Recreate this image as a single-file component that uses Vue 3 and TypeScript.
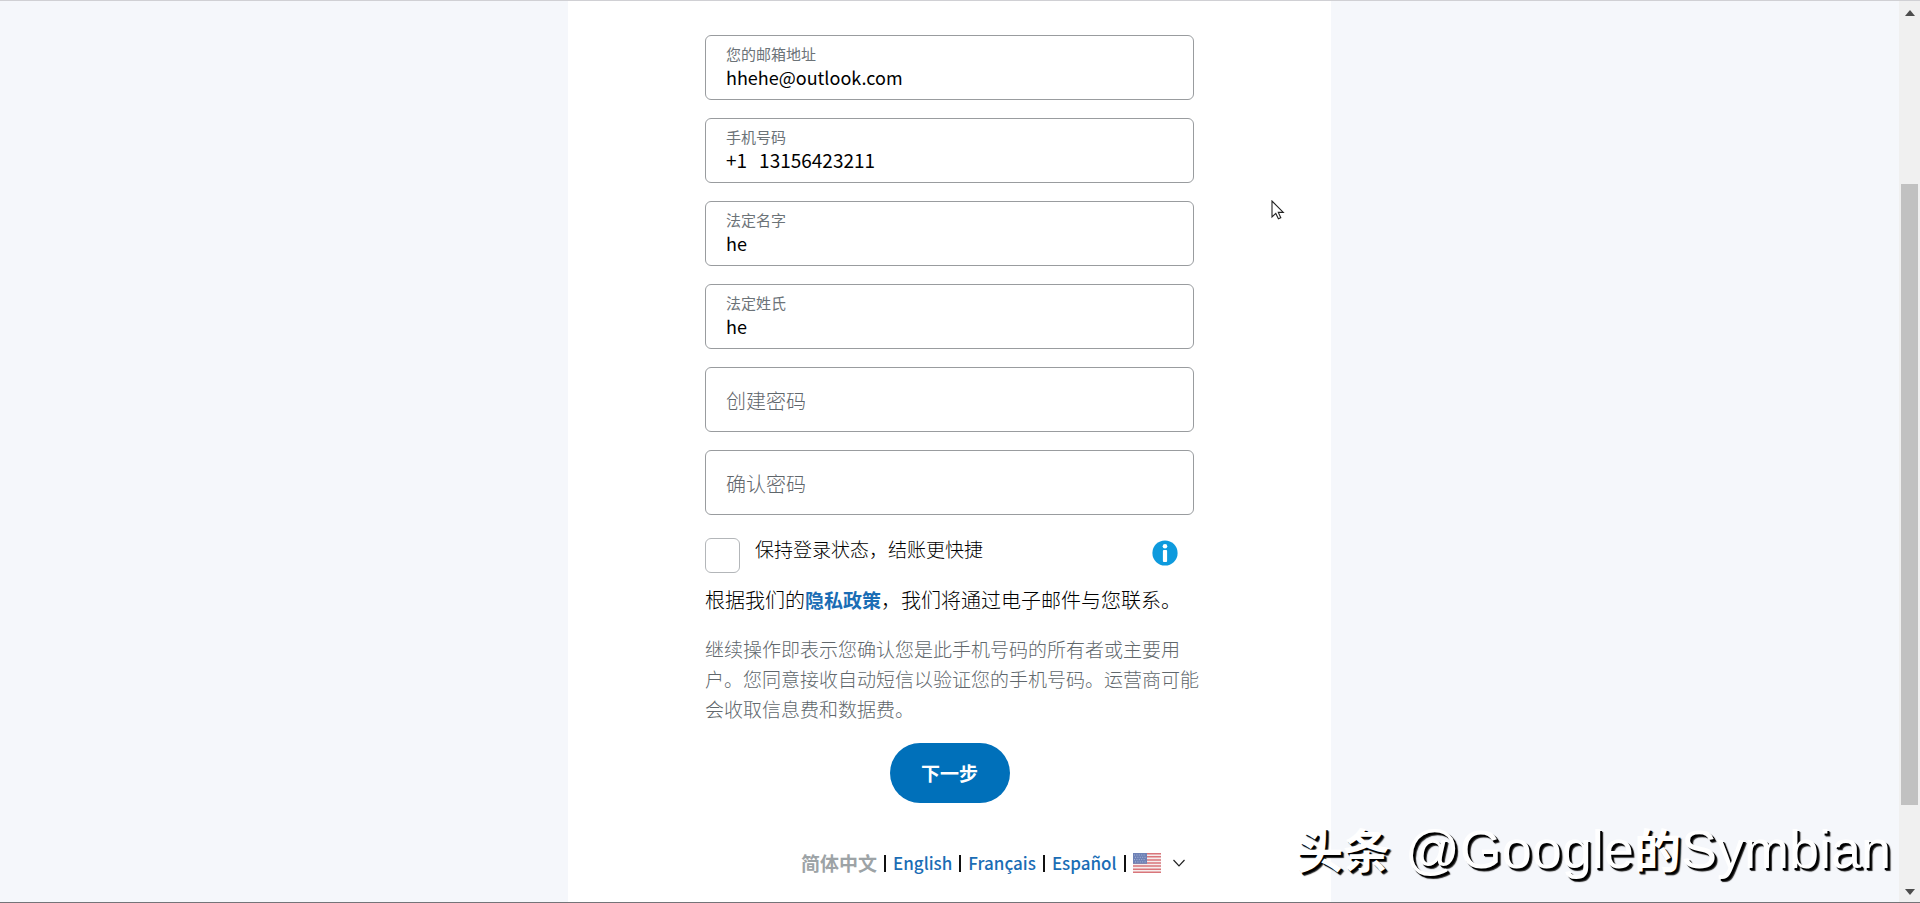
<script setup lang="ts">
import { ref } from 'vue'

interface TextField {
  id: string
  label: string
  type: string
  value: string
  prefix?: string
}

const fields = ref<TextField[]>([
  { id: 'email', label: '您的邮箱地址', type: 'email', value: 'hhehe@outlook.com' },
  { id: 'phone', label: '手机号码', type: 'tel', value: '13156423211', prefix: '+1' },
  { id: 'first-name', label: '法定名字', type: 'text', value: 'he' },
  { id: 'last-name', label: '法定姓氏', type: 'text', value: 'he' },
])

const passwords = ref([
  { id: 'password', label: '创建密码', value: '' },
  { id: 'confirm', label: '确认密码', value: '' },
])

const languages = ['English', 'Français', 'Español']
const staySignedIn = ref(false)
</script>

<template>
  <div class="window">
    <main class="page">
      <form class="card" @submit.prevent>
        <div class="fields">
          <div v-for="f in fields" :key="f.id" class="field">
            <label :for="f.id">{{ f.label }}</label>
            <div class="value">
              <span v-if="f.prefix" class="prefix">{{ f.prefix }}</span>
              <input :id="f.id" v-model="f.value" :type="f.type" />
            </div>
          </div>
          <div v-for="p in passwords" :key="p.id" class="field empty">
            <input :id="p.id" v-model="p.value" class="password" type="password" :placeholder="p.label" :aria-label="p.label" />
          </div>
        </div>

        <div class="stay">
          <input id="stay" v-model="staySignedIn" type="checkbox" />
          <label for="stay">保持登录状态，结账更快捷</label>
          <button class="info" type="button" aria-label="info">
            <svg viewBox="0 0 26 26" width="26" height="26">
              <circle cx="13" cy="13" r="12.6" fill="#0e9add" />
              <circle cx="13" cy="6.2" r="2.3" fill="#fff" />
              <rect x="10.9" y="10" width="4.2" height="12" rx="1" fill="#fff" />
            </svg>
          </button>
        </div>

        <p class="policy">根据我们的<a href="#">隐私政策</a>，我们将通过电子邮件与您联系。</p>
        <p class="consent">继续操作即表示您确认您是此手机号码的所有者或主要用户。您同意接收自动短信以验证您的手机号码。运营商可能会收取信息费和数据费。</p>

        <button class="next" type="submit">下一步</button>

        <nav class="languages">
          <a class="current" href="#">简体中文</a>
          <template v-for="l in languages" :key="l">
            <i class="bar"></i>
            <a href="#">{{ l }}</a>
          </template>
          <i class="bar"></i>
          <button class="country" type="button" aria-label="country">
            <svg class="flag" viewBox="0 0 28 20" width="28" height="20">
              <path fill="#f6eeee" d="M0 0h28v20H0z" />
              <path stroke="#d9767b" stroke-width="1.54" d="M0 .77h28M0 3.85h28M0 6.92h28M0 10h28M0 13.08h28M0 16.15h28M0 19.23h28" />
              <path fill="#6f82b6" d="M0 0h14v10.8H0z" />
              <path stroke="#a9b5d6" stroke-width="1" stroke-dasharray="1 1.4" d="M1 2h12M2 4.3h11M1 6.6h12M2 8.9h11" />
            </svg>
            <svg viewBox="0 0 12 8" width="12" height="8">
              <path d="M.5 1 6 6.8 11.5 1" fill="none" stroke="#222" stroke-width="1.2" />
            </svg>
          </button>
        </nav>
      </form>
    </main>

    <div class="scrollbar">
      <svg viewBox="0 0 10 6" width="10" height="6"><path d="M5 0l5 6H0z" fill="#4d4d4d" /></svg>
      <div class="track"><div class="thumb"></div></div>
      <svg viewBox="0 0 10 6" width="10" height="6"><path d="M0 0h10L5 6z" fill="#4d4d4d" /></svg>
    </div>

    <svg class="cursor" viewBox="0 0 14 20" width="14" height="20">
      <path d="M1 1v16l3.8-3.6 2.6 5.4 2.4-1.1-2.5-5.3h5z" fill="#fff" stroke="#222" stroke-width="1.1" />
    </svg>
    <div class="watermark"><b>头条</b> @Google<b>的</b>Symbian</div>
  </div>
</template>

<style>
body {
  margin: 0;
  overflow: hidden;
}
</style>

<style scoped>
* {
  box-sizing: border-box;
}
.window {
  position: relative;
  display: flex;
  height: 100vh;
  overflow: hidden;
  border-top: 1px solid #d0d0d4;
  border-bottom: 1px solid #747478;
  background: #f5f7fb;
  color: #000;
  font-family: "Noto Sans CJK SC", sans-serif;
  font-size: 19px;
  font-weight: 300;
  line-height: 30px;
}
input,
button {
  margin: 0;
  padding: 0;
  border: 0;
  background: none;
  font: inherit;
  color: inherit;
}
.page {
  flex: 1;
  display: flex;
  justify-content: center;
}
.card {
  display: flex;
  flex-direction: column;
  width: 763px;
  max-width: 100%;
  padding: 34px 137px 0;
  background: #fff;
}
.card > * {
  flex-shrink: 0;
}
.fields {
  display: flex;
  flex-direction: column;
  gap: 18px;
}
.field {
  display: flex;
  flex-direction: column;
  height: 65px;
  padding: 8px 20px 10px;
  border: 1px solid #999c9f;
  border-radius: 6px;
}
.field.empty {
  padding: 10px 20px 8px;
}
.field label {
  color: #6c7378;
  font-size: 15px;
  font-weight: 400;
  line-height: 20px;
}
.value {
  display: flex;
  gap: 12px;
  line-height: 26px;
}
.field input {
  flex: 1;
  min-width: 0;
  height: 26px;
  outline: 0;
  font-size: 18px;
  font-weight: 400;
}
.field input[type="tel"] {
  font-size: 19px;
}
.prefix {
  font-weight: 400;
}
.password::placeholder {
  color: #5f666b;
  font-size: 20px;
  font-weight: 300;
  opacity: 1;
}
.stay {
  display: flex;
  align-items: flex-start;
  margin-top: 23px;
}
.stay input {
  appearance: none;
  width: 35px;
  height: 35px;
  margin-right: 15px;
  border: 1px solid #b3b6b9;
  border-radius: 6px;
}
.stay label {
  line-height: 22px;
}
.info {
  height: 26px;
  margin: 2px 16px 0 auto;
}
.info svg {
  display: block;
}
p {
  margin: 0;
}
.policy {
  margin-top: 12px;
  font-size: 20px;
}
a {
  color: #1a6db5;
  font-size: 19px;
  font-weight: 700;
  text-decoration: none;
}
.consent {
  margin: 19px -8px 0 0;
  color: #60676c;
}
.next {
  align-self: center;
  width: 120px;
  height: 60px;
  margin-top: 19px;
  border-radius: 30px;
  background: #0070ba;
  color: #fff;
  font-weight: 700;
}
.languages {
  display: flex;
  align-items: center;
  gap: 7px;
  margin: 45px 0 0 96px;
  white-space: nowrap;
}
.languages > * {
  flex-shrink: 0;
}
.languages a {
  font-size: 17px;
  font-weight: 500;
}
.languages .current {
  color: #9da3a6;
  font-size: 19px;
  font-weight: 700;
}
.bar {
  width: 2px;
  height: 17px;
  background: #111;
}
.country {
  display: flex;
  align-items: center;
  gap: 12px;
}
.scrollbar {
  display: flex;
  flex-direction: column;
  align-items: center;
  width: 21px;
  padding: 9px 0 7px;
  background: #f0f0f0;
}
.track {
  flex: 1;
  display: flex;
  flex-direction: column;
  width: 17px;
  padding: 168px 0 84px;
}
.thumb {
  flex: 1;
  background: #c1c1c1;
}
.cursor {
  position: absolute;
  left: 1271px;
  top: 199px;
}
.watermark {
  position: absolute;
  right: 29px;
  bottom: 14px;
  color: #fff;
  font-family: "Liberation Sans", "Noto Sans CJK SC", sans-serif;
  font-size: 54px;
  font-weight: 400;
  line-height: 72px;
  white-space: nowrap;
  text-shadow: 2px 2px 0 #000, 3px 3px 1px #222;
}
.watermark b {
  font-size: 47px;
  font-weight: 700;
}
</style>
